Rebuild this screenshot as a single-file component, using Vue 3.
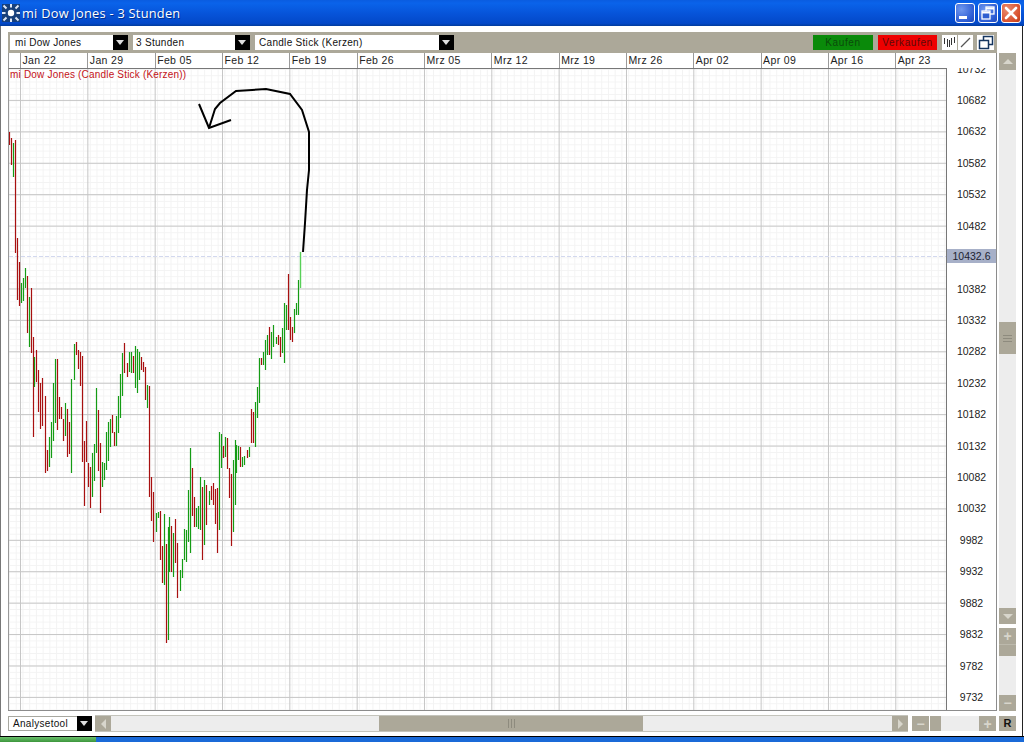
<script setup>
const dates = ['Jan 22','Jan 29','Feb 05','Feb 12','Feb 19','Feb 26','Mrz 05','Mrz 12','Mrz 19','Mrz 26','Apr 02','Apr 09','Apr 16','Apr 23']
const vLines = dates.map((_, i) => 20.5 + i * 67.33)
const levels = []
for (let i = 0; i < 21; i++) {
  levels.push({ value: 10732 - i * 50, top: 68.6 + i * 31.42 })
}
const prices = levels.filter(p => p.value !== 10432)
const hLines = prices.slice(1).map(p => p.top)
const raw = `9 r 132 145;11 r 138 165;13 g 143 177;15 r 140 253;17 r 238 300;19 r 262 306;21 g 283 303;23 g 278 301;25 g 268 288;27 r 276 333;29 g 297 347;31 r 288 353;33 r 337 437;34 g 357 387;36 r 350 382;38 r 370 412;40 r 383 429;42 r 378 426;45 r 396 473;47 r 450 471;49 g 437 467;51 g 422 458;53 g 383 441;55 g 359 423;57 r 359 430;59 r 397 419;61 r 407 419;63 r 419 441;65 g 403 436;67 r 409 457;69 r 422 454;71 g 379 473;74 g 344 380;76 r 342 355;78 r 350 369;80 r 352 386;82 r 356 462;84 r 441 506;86 r 421 462;88 r 463 487;90 r 467 508;92 g 453 497;94 g 444 481;96 g 388 453;98 r 410 471;100 r 443 513;102 g 462 487;104 g 463 480;106 g 432 470;108 g 422 461;110 g 419 447;112 r 415 433;114 r 432 446;116 g 416 446;118 g 396 433;120 g 374 418;122 g 353 396;124 r 343 373;127 r 363 377;129 g 352 372;131 g 352 373;133 r 356 373;135 g 346 388;137 g 349 393;139 g 352 380;141 r 357 370;143 r 362 372;145 r 367 400;147 g 385 408;149 r 386 497;151 r 477 521;153 r 492 542;156 g 513 532;158 g 512 518;160 r 511 560;162 r 546 583;164 g 514 585;166 r 544 643;168 g 527 640;169 g 517 572;171 r 526 572;173 g 533 577;175 r 519 563;177 r 543 598;180 g 570 591;182 g 559 578;184 g 529 560;186 g 530 562;188 g 490 542;190 g 448 553;192 r 468 516;194 r 497 527;196 g 508 527;198 g 506 529;200 g 477 530;202 r 487 560;204 g 480 545;206 r 485 525;209 g 491 505;211 r 486 500;213 r 483 505;215 r 489 524;217 r 488 553;219 g 432 530;221 g 434 468;223 r 446 458;225 g 437 457;227 r 438 469;229 r 468 498;231 r 474 546;233 g 460 532;235 g 440 505;236 g 445 473;238 g 446 460;240 r 447 467;242 g 457 467;244 g 456 465;247 r 450 458;249 g 447 457;251 r 409 443;253 r 412 443;255 g 402 447;257 g 387 418;259 g 358 403;261 r 358 365;263 g 352 365;265 g 340 370;267 g 335 355;269 r 327 355;271 g 332 359;273 g 325 347;276 g 337 344;278 r 335 345;280 r 337 357;282 g 328 353;284 g 303 363;286 g 305 330;288 r 274 330;290 r 317 340;292 r 327 342;294 g 309 333;296 g 303 315;298 g 280 315`
const candles = raw.split(';').map(s => {
  const [x, c, y1, y2] = s.split(' ')
  return { x: +x + 0.5, color: c === 'r' ? '#a81010' : '#149c14', y1: +y1, y2: +y2 }
})
</script>

<template>
  <div class="win">
    <header class="title">
      <svg class="logo" viewBox="0 0 18 18" width="18" height="18">
        <rect width="18" height="18" fill="#17407c"/>
        <circle cx="9" cy="9" r="3.200" fill="#fff"/>
        <path d="M9 0v3.500M9 14.500v3.500M0 9h3.500M14.500 9h3.500M1.500 1.500l3 3M16.500 1.500l-3 3M1.500 16.500l3-3M16.500 16.500l-3-3" stroke="#dfe7f4" stroke-width="2"/>
      </svg>
      <span class="title-text">mi Dow Jones - 3 Stunden</span>
      <span class="spacer"></span>
      <div class="wbtn blue">
        <svg viewBox="0 0 20 20" width="20" height="20"><rect x="4" y="13" width="8" height="3" fill="#fff"/></svg>
      </div>
      <div class="wbtn blue">
        <svg viewBox="0 0 20 20" width="20" height="20" fill="none" stroke="#fff" stroke-width="1.300"><rect x="8" y="4" width="8" height="7"/><path d="M8 5.500h8" stroke-width="2"/><rect x="4" y="8" width="8" height="8" fill="#2f5fd0"/><path d="M4 9.500h8" stroke-width="2"/></svg>
      </div>
      <div class="wbtn red">
        <svg viewBox="0 0 20 20" width="20" height="20"><path d="M5 5l10 10M15 5L5 15" stroke="#fff" stroke-width="2.600" stroke-linecap="round"/></svg>
      </div>
    </header>

    <div class="body">
      <div class="toolbar">
        <div class="select s1"><span>mi Dow Jones</span><i class="drop"></i></div>
        <div class="select s2"><span>3 Stunden</span><i class="drop"></i></div>
        <div class="select s3"><span>Candle Stick (Kerzen)</span><i class="drop"></i></div>
        <span class="spacer"></span>
        <div class="trade buy">Kaufen</div>
        <div class="trade sell">Verkaufen</div>
        <div class="tools">
          <div class="tool">
            <svg viewBox="0 0 15 15" width="15" height="15" stroke="#333" stroke-width="1"><path d="M2.500 3v6M5.500 4v8M7.500 5v7M9.500 3v7M12.500 2v6"/></svg>
          </div>
          <div class="tool">
            <svg viewBox="0 0 15 15" width="15" height="15"><path d="M3 12L12 3" stroke="#555" stroke-width="1.200"/></svg>
          </div>
        </div>
        <div class="tool popout">
          <svg viewBox="0 0 17 15" width="17" height="15" fill="#fff" stroke="#15355f" stroke-width="1.500"><rect x="6.500" y="1.500" width="9" height="8"/><rect x="2.500" y="5.500" width="9" height="8"/></svg>
        </div>
      </div>

      <div class="main">
        <div class="chart-col">
          <div class="dates">
            <div class="date-lead"></div>
            <div v-for="d in dates" :key="d" class="date">{{ d }}</div>
          </div>
          <div class="plot-row">
            <div class="plot">
              <div class="legend">mi Dow Jones (Candle Stick (Kerzen))</div>
              <svg class="canvas" viewBox="9 69 937 641" width="937" height="641">
                <defs>
                  <pattern id="minor" x="9" y="69" width="6.730" height="6.280" patternUnits="userSpaceOnUse">
                    <path d="M0 0.500H6.730M0.500 0V6.280" stroke="#f3f3f3" stroke-width="1" fill="none"/>
                  </pattern>
                </defs>
                <rect x="9" y="69" width="937" height="641" fill="#fff"/>
                <rect x="9" y="69" width="937" height="641" fill="url(#minor)"/>
                <line v-for="x in vLines" :key="'v' + x" :x1="x" :x2="x" y1="69" y2="710" stroke="#c6c6c6"/>
                <line v-for="y in hLines" :key="'h' + y" x1="9" x2="946" :y1="y + 0.4" :y2="y + 0.4" stroke="#c6c6c6"/>
                <line x1="9" x2="946" y1="256.500" y2="256.500" stroke="#d2d8ee" stroke-dasharray="4 2"/>
                <line v-for="c in candles" :key="c.x" :x1="c.x" :x2="c.x" :y1="c.y1" :y2="c.y2" :stroke="c.color" stroke-width="1.200"/>
                <line x1="300.500" x2="300.500" y1="252" y2="288" stroke="#58d058" stroke-width="1.400"/>
                <polyline points="303,252 305,223 307,190 309,170 309,132 302,110 290,94 266,89 252,90 236,91 220,103 215,109 209,128" fill="none" stroke="#000" stroke-width="2"/>
                <polyline points="199,104 209,128 231,120" fill="none" stroke="#000" stroke-width="2"/>
              </svg>
            </div>
            <div class="axis">
              <div v-for="p in prices" :key="p.value" class="price" :style="{ top: p.top - 68 + 'px' }">{{ p.value }}</div>
              <div class="price-now">10432.6</div>
            </div>
          </div>
        </div>
        <div class="vscroll">
          <div class="sbtn top"><i class="tri up"></i></div>
          <div class="track t1"></div>
          <div class="thumb"><i class="grip"></i></div>
          <div class="track t2"></div>
          <div class="sbtn"><i class="tri down"></i></div>
          <div class="gap"></div>
          <div class="sbtn plus">+</div>
          <div class="sbtn blank"></div>
          <div class="track t3"></div>
          <div class="sbtn plus">−</div>
        </div>
      </div>

      <div class="bottom">
        <div class="select s4"><span>Analysetool</span><i class="drop"></i></div>
        <div class="hscroll">
          <div class="hbtn"><i class="tri left"></i></div>
          <div class="htrack h1"></div>
          <div class="hthumb"><i class="hgrip"></i></div>
          <div class="htrack h2"></div>
          <div class="hbtn"><i class="tri right"></i></div>
        </div>
        <div class="zoom">
          <div class="hbtn sym">−</div>
          <div class="zthumb"></div>
          <div class="htrack h3"></div>
          <div class="hbtn sym">+</div>
        </div>
        <div class="reset">R</div>
      </div>
    </div>

    <div class="taskbar"><div class="start"></div></div>
  </div>
</template>

<style>
html, body { margin: 0; padding: 0; background: #fff; overflow: hidden; }
</style>

<style scoped>
.win {
  width: 1024px;
  height: 742px;
  display: flex;
  flex-direction: column;
  font-family: "Liberation Sans", Arial, sans-serif;
  overflow: hidden;
  background: #fff;
}
.title {
  height: 26px;
  flex: none;
  display: flex;
  align-items: center;
  padding: 0 3px 0 2px;
  gap: 3px;
  box-sizing: border-box;
  background: linear-gradient(180deg, #0a5ce0 0%, #0a63ea 12%, #0653d8 55%, #0348c8 90%, #023c9c 100%);
  color: #fff;
}
.logo { flex: none; margin-left: 0; margin-right: -1px; }
.title-text {
  font-family: "Open Sans", sans-serif;
  font-size: 12.800px;
  letter-spacing: .25px;
  text-shadow: 1px 1px 0 #03308c;
}
.spacer { flex: 1; }
.wbtn {
  width: 20px;
  height: 20px;
  border: 1px solid #fff;
  border-radius: 3px;
  box-sizing: border-box;
  display: flex;
  align-items: center;
  justify-content: center;
  overflow: hidden;
}
.wbtn svg { flex: none; }
.wbtn.blue { background: radial-gradient(circle at 30% 30%, #6f97ee, #2c5cd4 70%, #2049b8); }
.wbtn.red { background: radial-gradient(circle at 30% 30%, #ea8c70, #d8502c 70%, #b93a16); }
.body {
  flex: 1;
  min-height: 0;
  box-sizing: border-box;
  padding: 6px 7px 0 8px;
  background: #fff;
  display: flex;
  flex-direction: column;
  box-shadow: inset 1px 0 0 #777, inset -1px 0 0 #fff, inset -2px 0 0 #222;
}
.toolbar {
  width: 989px;
  height: 21px;
  box-sizing: border-box;
  flex: none;
  display: flex;
  align-items: center;
  background: #aca899;
  padding: 0 3px 0 2px;
}
.select {
  background: #fff;
  height: 15px;
  display: flex;
  align-items: center;
  font-size: 10px;
  letter-spacing: .3px;
  color: #111;
  box-sizing: border-box;
  flex: none;
}
.select span { flex: 1; padding-left: 5px; white-space: nowrap; overflow: hidden; }
.s1 { width: 118px; margin-right: 5px; }
.s2 { width: 117px; margin-right: 5px; }
.s3 { width: 199px; }
.s2 span { padding-left: 3px; }
.s3 span { padding-left: 4px; }
.s4 { width: 84px; box-shadow: 0 0 0 1px #a8a8a0 inset; }
.drop {
  width: 15px;
  height: 15px;
  flex: none;
  background: #000;
  position: relative;
}
.drop::after {
  content: "";
  position: absolute;
  left: 3px;
  top: 5px;
  border-left: 4px solid transparent;
  border-right: 4px solid transparent;
  border-top: 5px solid #ddd;
}
.trade {
  height: 15px;
  line-height: 15px;
  text-align: center;
  font-size: 10px;
  letter-spacing: .6px;
  flex: none;
}
.buy { width: 60px; background: #0a8a0a; color: #0a4a0a; margin-right: 5px; }
.sell { width: 59px; background: #ee0000; color: #5a0a0a; margin-right: 5px; }
.tools { display: flex; gap: 1px; margin-right: 4px; flex: none; }
.tool {
  width: 15px;
  height: 15px;
  background: #fff;
  display: flex;
  align-items: center;
  justify-content: center;
}
.popout { width: 17px; flex: none; }
.main {
  flex: none;
  display: flex;
  height: 658px;
}
.chart-col {
  width: 989px;
  display: flex;
  flex-direction: column;
  box-sizing: border-box;
  border-right: 1px solid #8c8c8c;
  border-bottom: 1px solid #8c8c8c;
}
.dates {
  height: 15px;
  flex: none;
  display: flex;
  box-sizing: border-box;
  background: #fff;
  overflow: hidden;
}
.date-lead { width: 12px; flex: none; box-sizing: border-box; border-left: 1px solid #999; }
.date {
  width: 67.330px;
  flex: none;
  box-sizing: border-box;
  border-left: 1px solid #9a9a9a;
  padding-left: 1.500px;
  font-size: 10.500px;
  line-height: 14px;
  letter-spacing: .35px;
  color: #222;
  white-space: nowrap;
}
.plot-row {
  flex: 1;
  min-height: 0;
  display: flex;
}
.plot {
  width: 939px;
  flex: none;
  box-sizing: border-box;
  border: 1px solid #777;
  border-left-color: #999;
  border-bottom: 0;
  position: relative;
  overflow: hidden;
  background: #fff;
}
.canvas { display: block; }
.legend {
  position: absolute;
  left: 1px;
  top: 0;
  z-index: 1;
  font-size: 10px;
  letter-spacing: .19px;
  line-height: 11px;
  color: #c41218;
  white-space: nowrap;
}
.axis {
  flex: 1;
  position: relative;
  overflow: hidden;
  background: #fff;
}
.price {
  position: absolute;
  left: 0;
  right: 0;
  text-align: center;
  transform: translateY(-50%);
  font-size: 10.500px;
  line-height: 12px;
  color: #222;
}
.price-now {
  position: absolute;
  left: 0;
  right: 0;
  top: 181px;
  height: 14px;
  line-height: 14px;
  background: #a7b0c8;
  color: #1c2230;
  font-size: 10.500px;
  text-align: center;
}
.vscroll {
  width: 17px;
  margin-left: 2px;
  height: 658px;
  flex: none;
  display: flex;
  flex-direction: column;
  background: #fff;
}
.sbtn {
  height: 16px;
  flex: none;
  background: #aca899;
  display: flex;
  align-items: center;
  justify-content: center;
}
.sbtn.top { height: 17px; }
.sbtn.plus { color: #d8d6cc; font-size: 14px; font-weight: 700; line-height: 16px; }
.sbtn.blank { height: 12px; box-sizing: border-box; border-top: 1px solid #bcb9ac; }
.track { background: #ededed; flex: none; }
.t1 { height: 252px; }
.thumb {
  height: 32px;
  flex: none;
  background: #aca899;
  display: flex;
  align-items: center;
  justify-content: center;
}
.grip { width: 9px; height: 7px; background: repeating-linear-gradient(180deg, #8e8b7e 0 1px, transparent 1px 3px); }
.t2 { height: 254px; }
.gap { height: 4px; flex: none; background: #fff; }
.t3 { height: 39px; }
.tri { width: 0; height: 0; display: block; }
.tri.up { border-left: 5px solid transparent; border-right: 5px solid transparent; border-bottom: 5px solid #d8d6cc; }
.tri.down { border-left: 5px solid transparent; border-right: 5px solid transparent; border-top: 5px solid #d8d6cc; }
.tri.left { border-top: 5px solid transparent; border-bottom: 5px solid transparent; border-right: 5px solid #d8d6cc; }
.tri.right { border-top: 5px solid transparent; border-bottom: 5px solid transparent; border-left: 5px solid #d8d6cc; }
.bottom {
  flex: none;
  display: flex;
  align-items: flex-start;
  margin-top: 5px;
  height: 15px;
}
.hscroll {
  display: flex;
  margin-left: 3px;
  height: 15px;
  width: 813px;
  flex: none;
  box-shadow: 0 -1px 0 #c4c4bc, 0 1px 0 #c4c4bc;
}
.hbtn {
  width: 16px;
  height: 15px;
  flex: none;
  background: #aca899;
  display: flex;
  align-items: center;
  justify-content: center;
}
.hbtn.sym { width: 17px; color: #d8d6cc; font-size: 14px; font-weight: 700; }
.htrack { height: 15px; background: #ededed; flex: none; }
.h1 { width: 268px; }
.h2 { width: 249px; }
.hthumb {
  width: 264px;
  height: 15px;
  flex: none;
  background: #aca899;
  display: flex;
  align-items: center;
  justify-content: center;
}
.hgrip { width: 7px; height: 9px; background: repeating-linear-gradient(90deg, #8e8b7e 0 1px, transparent 1px 3px); }
.zoom { display: flex; margin-left: 4px; height: 15px; width: 84px; flex: none; background: #fff; }
.zthumb { width: 11px; height: 15px; background: #aca899; margin-left: 1px; flex: none; }
.h3 { width: 38px; }
.reset {
  width: 17px;
  height: 15px;
  margin-left: 3px;
  flex: none;
  background: #aca899;
  text-align: center;
  font-size: 11px;
  font-weight: 700;
  line-height: 15px;
  color: #111;
}
.taskbar {
  flex: none;
  height: 6px;
  border-top: 1px solid #000;
  box-sizing: border-box;
  background: #1a6ad8;
}
.start { width: 96px; height: 5px; background: linear-gradient(180deg, #6cc06c, #3c963c); }
</style>
